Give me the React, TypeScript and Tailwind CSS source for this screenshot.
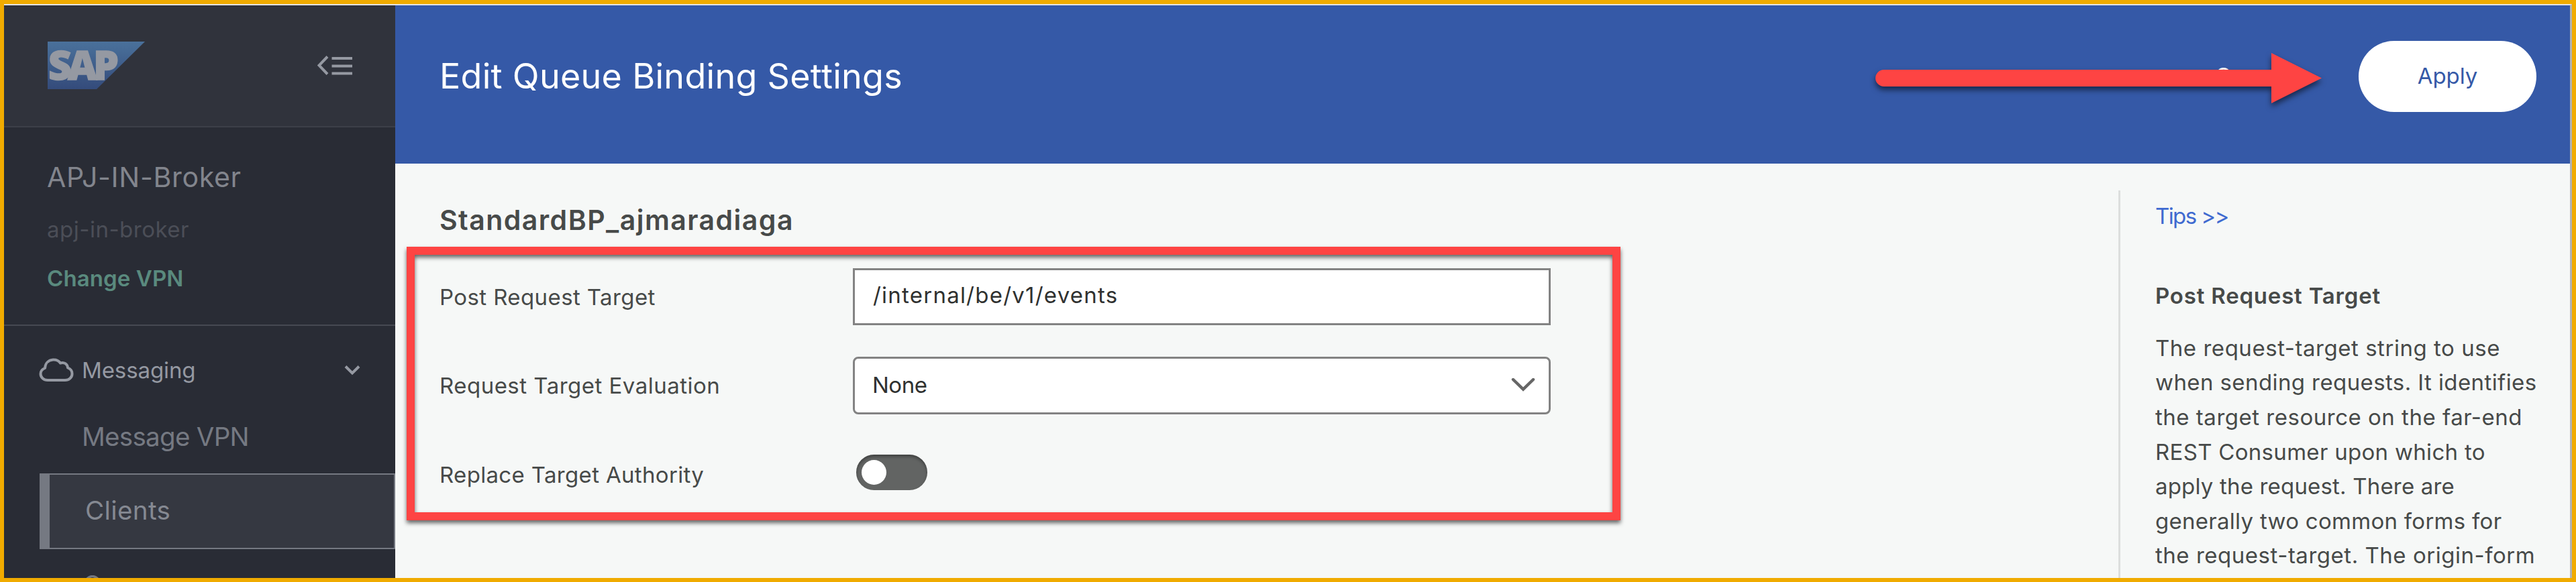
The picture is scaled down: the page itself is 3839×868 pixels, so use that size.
import type { ReactNode } from "react";

const tipLines = [
  { text: "The request-target string to use", spacing: "tracking-[0.53px]" },
  { text: "when sending requests. It identifies", spacing: "tracking-[0.4px]" },
  { text: "the target resource on the far-end", spacing: "tracking-[0.51px]" },
  { text: "REST Consumer upon which to", spacing: "tracking-[0.3px]" },
  { text: "apply the request. There are", spacing: "tracking-[0.18px]" },
  { text: "generally two common forms for", spacing: "tracking-[0.28px]" },
  { text: "the request-target. The origin-form", spacing: "tracking-[0.52px]" },
];

function SapLogo() {
  return (
    <svg width="145" height="72" viewBox="0 0 145 72" className="shrink-0 overflow-visible">
      <defs>
        <linearGradient id="sap" x1="0" y1="0" x2="0" y2="1">
          <stop offset="0" stopColor="#4a719b" />
          <stop offset="1" stopColor="#344b7b" />
        </linearGradient>
      </defs>
      <path d="M0 0H145L73 71H0Z" fill="url(#sap)" />
      <text
        x="1"
        y="57"
        textLength="105"
        lengthAdjust="spacing"
        fontFamily="Open Sans, sans-serif"
        fontWeight="800"
        fontSize="60"
        fill="#9599a2"
        stroke="#9599a2"
        strokeWidth="1.5"
      >
        SAP
      </text>
    </svg>
  );
}

function CollapseIcon() {
  return (
    <svg width="53" height="30" viewBox="0 0 53 30" fill="none" stroke="#9599a2" strokeWidth="4">
      <path d="M15 1.5L2.5 14.5L15 27.5M21.5 4H52M21.5 15.5H52M21.5 26.5H52" />
    </svg>
  );
}

function CloudIcon() {
  return (
    <svg width="52" height="36" viewBox="0 0 52 36" fill="none" stroke="#9599a2" strokeWidth="4" strokeLinejoin="round">
      <path d="M13 33H39C45 33 49.5 29 49.5 23.5C49.5 19 47 16 43 14.5C42.5 9 37.5 5.500 32 7.500C29.500 4 25.500 2.200 21 2.500C14 3 9.500 8 9 15C5 16.500 2.500 19.500 2.500 23.500C2.500 29 7 33 13 33Z" />
    </svg>
  );
}

function Sidebar() {
  return (
    <aside className="flex w-[583px] shrink-0 flex-col overflow-hidden bg-[#292c35] text-[33px] leading-[60px]">
      <div className="flex h-[182px] shrink-0 items-center justify-between border-b-2 border-[#3c3f48] bg-[#30333c] pr-[63px] pl-[65px]">
        <SapLogo />
        <CollapseIcon />
      </div>
      <div className="h-[296px] shrink-0 border-b-2 border-[#464952] pt-[44px] pl-[64px]">
        <div className="text-[41px] tracking-[0.7px] text-[#82858d]">APJ-IN-Broker</div>
        <div className="mt-[18px] tracking-[0.5px] text-[#4b4e57]">apj-in-broker</div>
        <div className="mt-[13px] font-semibold tracking-[0.1px] text-[#5a8a7e]">Change VPN</div>
      </div>
      <div className="mt-[36px] flex shrink-0 items-center pr-[52px] pl-[52px] text-[#9599a2]">
        <CloudIcon />
        <span className="ml-[12px] flex-1 tracking-[-0.1px]">Messaging</span>
        <svg width="24" height="16" viewBox="0 0 24 16" fill="none" stroke="#9599a2" strokeWidth="4">
          <path d="M2 2.500L12 12.500L22 2.500" />
        </svg>
      </div>
      <div className="mt-[39px] shrink-0 pl-[116px] text-[38.5px] tracking-[-0.7px] text-[#757982]">Message VPN</div>
      <div className="mt-[25px] ml-[53px] h-[113px] shrink-0 border-2 border-l-[15px] border-[#757982] bg-[#353841] pt-[23px] pl-[53px] text-[38.5px] tracking-[0.4px] text-[#858992]">
        Clients
      </div>
      <div className="mt-[23px] shrink-0 pl-[117px] text-[38.5px] text-[#757982]">Queues</div>
    </aside>
  );
}

function FieldRow({ label, className, children }: { label: string; className: string; children: ReactNode }) {
  return (
    <div className={`flex items-center ${className}`}>
      <div className="w-[616px] shrink-0 pt-[2px]">{label}</div>
      {children}
    </div>
  );
}

function BindingForm() {
  return (
    <section className="w-[2568px] shrink-0 pt-[54px] pl-[66px]">
      <h2 className="mb-[42px] text-[41px] leading-[60px] font-semibold tracking-[1.45px]">StandardBP_ajmaradiaga</h2>
      <FieldRow label="Post Request Target" className="h-[85px] tracking-[0.4px]">
        <div className="flex h-full w-[1040px] items-center border-[3px] border-[#838383] bg-white pb-[3px] pl-[27px] tracking-[1.23px] text-[#2f3130]">
          /internal/be/v1/events
        </div>
      </FieldRow>
      <FieldRow label="Request Target Evaluation" className="mt-[47px] h-[86px] tracking-[0.48px]">
        <div className="flex h-full w-[1040px] items-center justify-between rounded-[8px] border-[3px] border-[#838383] bg-white pr-[20px] pl-[26px] tracking-[-0.5px] text-[#2f3130]">
          None
          <svg width="36" height="22" viewBox="0 0 36 22" fill="none" stroke="#666666" strokeWidth="4.500">
            <path d="M3 2L18 16.500L33 2" strokeLinecap="round" />
          </svg>
        </div>
      </FieldRow>
      <FieldRow label="Replace Target Authority" className="mt-[60px] h-[60px] tracking-[0.33px]">
        <div className="mb-[7px] ml-[5px] flex h-[53px] w-[106px] items-center rounded-full bg-[#626463] pl-[8px] shadow-[inset_0_3px_4px_rgba(0,0,0,0.35)]">
          <div className="size-[37px] rounded-full bg-white" />
        </div>
      </FieldRow>
    </section>
  );
}

function Tips() {
  return (
    <aside className="mt-[40px] flex-1 border-l-[3px] border-[#dcdedd] pt-[13px] pl-[52px] leading-[51.6px] whitespace-nowrap">
      <div className="tracking-[-1.6px] text-[#3f6ad0]">Tips &gt;&gt;</div>
      <h3 className="mt-[67px] font-semibold tracking-[0.8px]">Post Request Target</h3>
      <p className="mt-[26.6px]">
        {tipLines.map((line) => (
          <span key={line.text} className={`block ${line.spacing}`}>
            {line.text}
          </span>
        ))}
      </p>
    </aside>
  );
}

export default function App() {
  return (
    <div className="relative h-[868px] w-[3839px] overflow-hidden border-[6px] border-[#f0ab00] bg-[#f6f8f7] font-[Inter,sans-serif] text-[33px] text-[#474a49]">
      <div className="flex h-full border-t-2 border-r-[3px] border-t-[#e2e3e4] border-r-[#b0b2b3]">
        <Sidebar />
        <main className="flex min-w-0 flex-1 flex-col">
          <header className="h-[236px] shrink-0 bg-[#3559a7] pt-[53px] pr-[50px] pl-[66px]">
            <div className="flex h-[106px] items-center text-white">
              <h1 className="flex-1 text-[52px] leading-[72px] tracking-[0.3px]">Edit Queue Binding Settings</h1>
              <div className="w-[214px]">Cancel</div>
              <button className="h-full w-[265px] rounded-full bg-white tracking-[-0.1px] text-[#3559a7]">Apply</button>
            </div>
          </header>
          <div className="flex min-h-0 flex-1 overflow-hidden">
            <BindingForm />
            <Tips />
          </div>
        </main>
      </div>
      <div className="absolute top-[362px] left-[600px] h-[408px] w-[1809px] border-[12px] border-[#fe4443] drop-shadow-[0_4px_3px_rgba(0,0,0,0.6)]" />
      <svg
        width="680"
        height="90"
        viewBox="0 0 680 90"
        className="absolute top-[68px] left-[2784px] drop-shadow-[0_5px_4px_rgba(0,0,0,0.55)]"
      >
        <path d="M17.500 30H595V5L670 42.500L595 80V55H17.500A12.500 12.500 0 0 1 17.500 30Z" fill="#fe4443" />
      </svg>
    </div>
  );
}
